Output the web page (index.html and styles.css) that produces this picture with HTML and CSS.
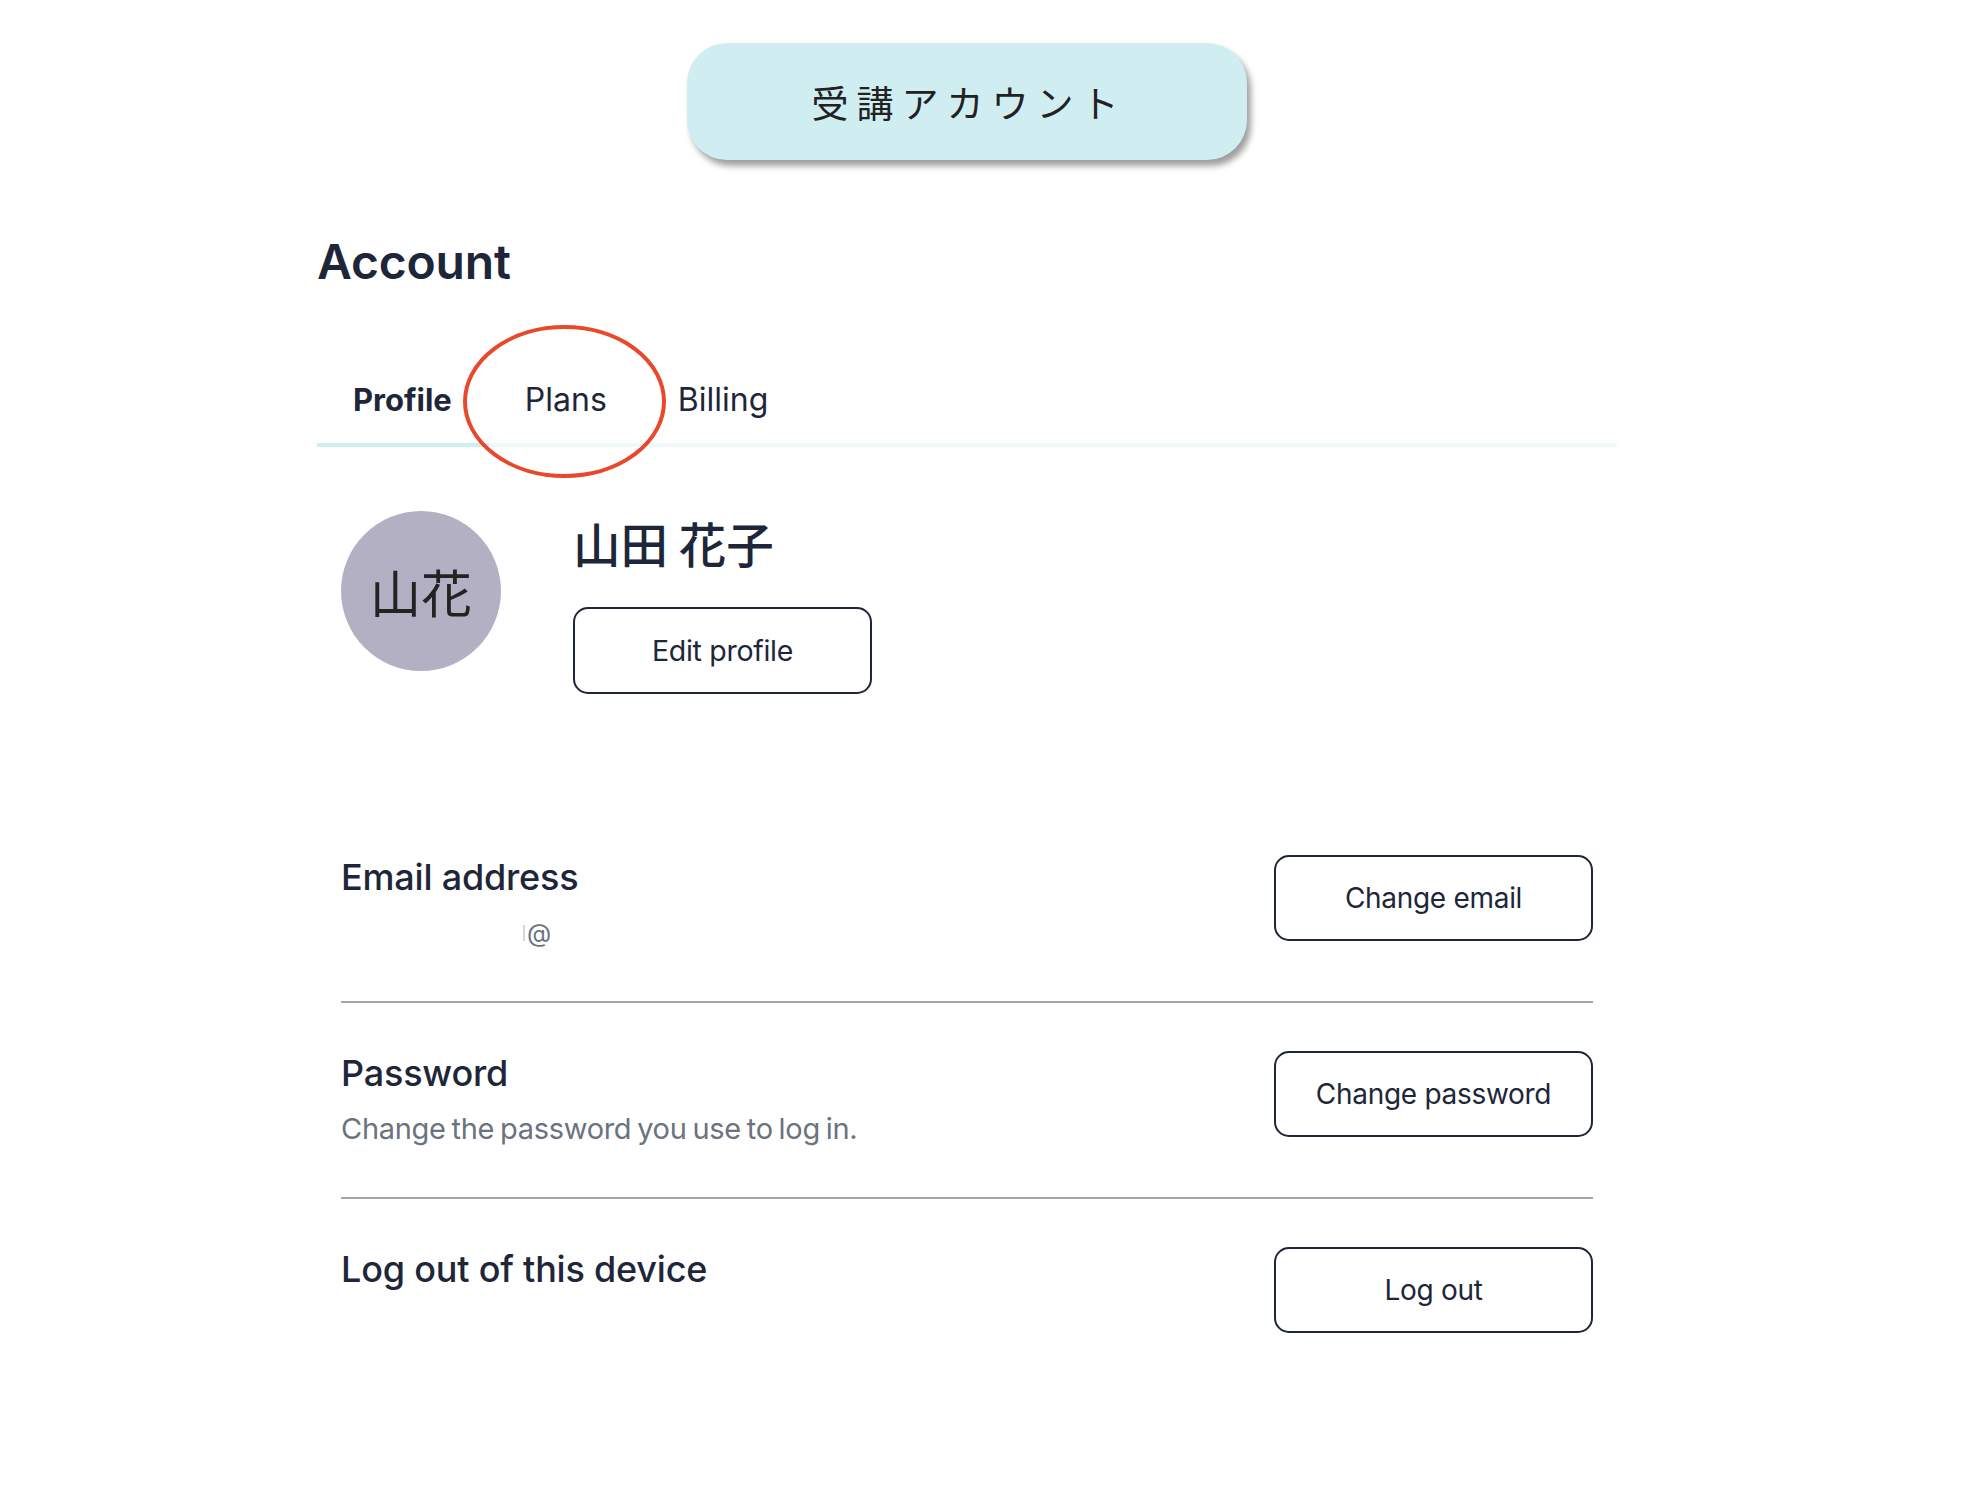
FILE: index.html
```html
<!DOCTYPE html>
<html lang="ja">
<head>
<meta charset="utf-8">
<title>Account</title>
<link rel="stylesheet" href="styles.css">
</head>
<body>
<div class="page">
  <div class="banner">受講アカウント</div>
  <main class="account">
    <h1 class="title">Account</h1>
    <nav class="tabs">
      <a class="tab active">Profile</a>
      <a class="tab">Plans</a>
      <a class="tab">Billing</a>
      <svg class="mark" width="203" height="153" viewBox="0 0 203 153" aria-hidden="true">
        <ellipse cx="101.5" cy="76.5" rx="99.5" ry="74.5" fill="none" stroke="#e8482b" stroke-width="4"/>
      </svg>
    </nav>
    <section class="profile">
      <div class="avatar">山花</div>
      <div class="profile-info">
        <div class="name">山田 花子</div>
        <button class="btn btn-edit">Edit profile</button>
      </div>
    </section>
    <section class="rows">
      <div class="row">
        <div class="row-text">
          <div class="row-title">Email address</div>
          <div class="row-sub email"><span class="redact"></span>@</div>
        </div>
        <button class="btn">Change email</button>
      </div>
      <div class="row">
        <div class="row-text">
          <div class="row-title">Password</div>
          <div class="row-sub">Change the password you use to log in.</div>
        </div>
        <button class="btn">Change password</button>
      </div>
      <div class="row">
        <div class="row-text">
          <div class="row-title">Log out of this device</div>
        </div>
        <button class="btn">Log out</button>
      </div>
    </section>
  </main>
</div>
</body>
</html>
```

FILE: styles.css
```css
* { box-sizing: border-box; }

html, body {
  margin: 0;
  padding: 0;
  background: #ffffff;
}

body {
  font-family: Inter, "Noto Sans", "Noto Sans CJK JP", sans-serif;
  color: #1e2639;
}

.page {
  width: 1934px;
}

.banner {
  width: 560px;
  height: 117px;
  margin: 43px auto 0;
  background: #d0eef2;
  border-radius: 40px;
  box-shadow: 4px 6px 6px rgba(0, 0, 0, 0.38);
  display: flex;
  align-items: center;
  justify-content: center;
  padding-left: 4px;
  font-family: "Noto Sans CJK JP", sans-serif;
  font-size: 37px;
  font-weight: 400;
  letter-spacing: 8px;
  color: #222222;
}

.account {
  width: 1300px;
  margin: 0 auto;
}

.title {
  margin: 73px 0 0;
  font-size: 48px;
  line-height: 58px;
  font-weight: 600;
  letter-spacing: -0.2px;
}

.tabs {
  position: relative;
  display: flex;
  margin-top: 89px;
  border-bottom: 4px solid #f0f9fa;
}

.tab {
  padding: 0 35px 23px 36px;
  font-size: 32px;
  line-height: 40px;
  color: #1e2639;
  margin-bottom: -4px;
  border-bottom: 4px solid transparent;
}

.tab.active {
  padding-right: 37px;
  font-weight: 700;
  font-size: 31px;
  border-bottom-color: #d0eef2;
}

.mark {
  position: absolute;
  left: 146px;
  top: -55px;
}

.profile {
  display: flex;
  align-items: flex-start;
  gap: 72px;
  padding: 0 24px;
  margin-top: 64px;
}

.avatar {
  width: 160px;
  height: 160px;
  border-radius: 50%;
  background: #b4b0c4;
  display: flex;
  align-items: center;
  justify-content: center;
  font-family: "Noto Sans CJK JP", sans-serif;
  font-size: 51px;
  color: #232323;
}

.profile-info {
  padding-top: 4px;
}

.name {
  font-family: "Noto Sans CJK JP", sans-serif;
  font-size: 47.5px;
  line-height: 56px;
  font-weight: 500;
  color: #1e2639;
}

.btn {
  width: 319px;
  height: 86px;
  border: 2px solid #1e2639;
  border-radius: 15px;
  background: #ffffff;
  font-family: Inter, sans-serif;
  font-size: 28px;
  color: #1e2639;
  letter-spacing: -0.3px;
  padding: 0;
  flex-shrink: 0;
}

.btn-edit {
  width: 299px;
  height: 87px;
  margin-top: 36px;
  font-size: 28.5px;
}

.rows {
  margin-top: 161px;
  padding: 0 24px;
}

.row {
  display: flex;
  justify-content: space-between;
  align-items: flex-start;
  padding: 48px 0 50px;
  border-bottom: 2px solid #a4a8ae;
}

.row:first-child {
  padding-top: 0;
}

.row:last-child {
  border-bottom: none;
}

.row-title {
  font-size: 36px;
  line-height: 44px;
  font-weight: 500;
  letter-spacing: -0.2px;
}

.row-sub {
  margin-top: 16px;
  font-size: 29px;
  line-height: 36px;
  color: #6b7280;
  letter-spacing: -0.3px;
  word-spacing: -2px;
}

.email {
  padding-left: 182px;
  font-size: 25px;
  display: flex;
  align-items: center;
  gap: 2px;
}

.redact {
  display: inline-block;
  width: 2px;
  height: 16px;
  background: #d4d6da;
}
```
